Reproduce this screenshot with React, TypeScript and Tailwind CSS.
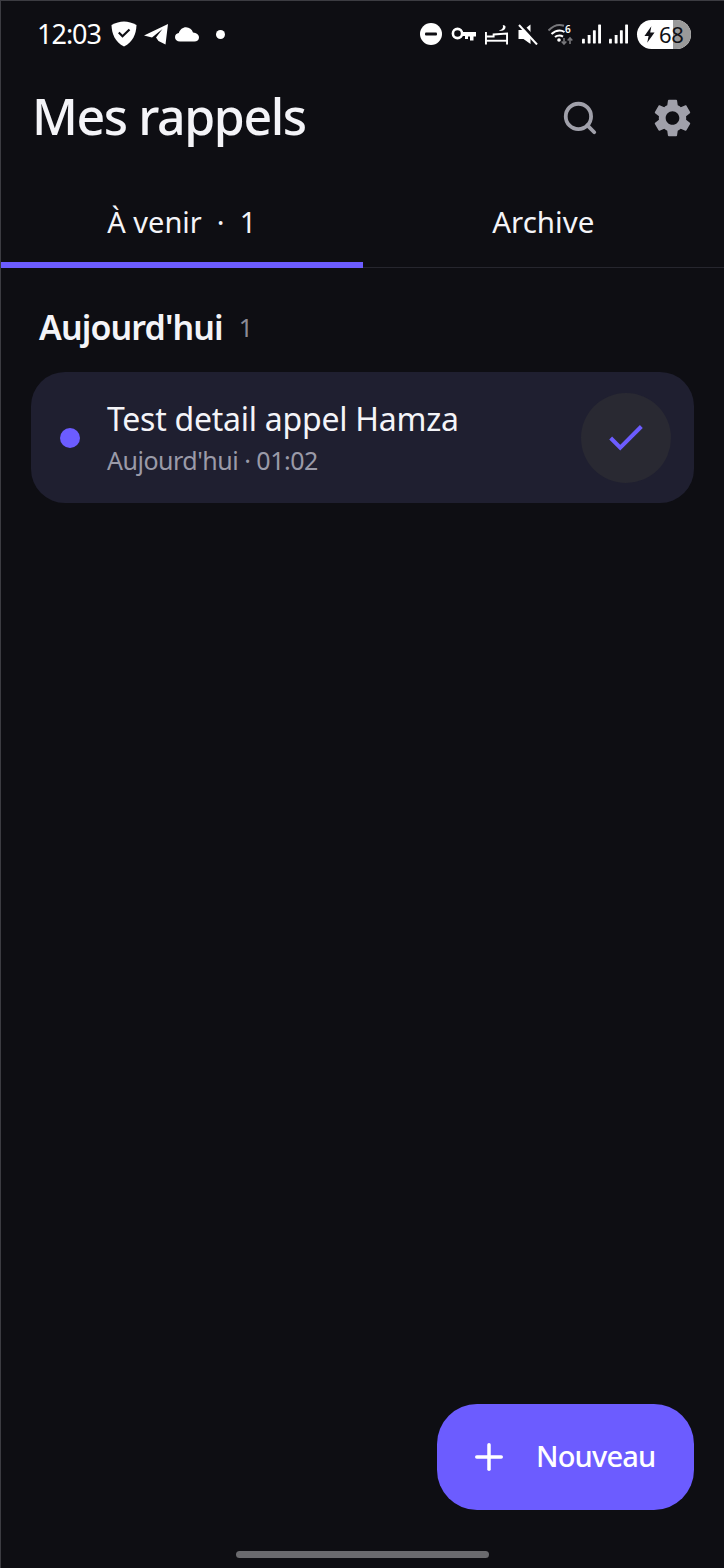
import { Search, Check, Plus } from "lucide-react";

const FONT = "font-['Noto_Sans',sans-serif]";

function Shield() {
  return (
    <svg width="26" height="26" viewBox="0 0 26 26">
      <path d="M13 0.5C9 0.5 4.5 1.8 0.5 4C0.8 13 4 21 13 25.5C22 21 25.2 13 25.5 4C21.5 1.8 17 0.5 13 0.5Z" fill="#fff" />
      <path d="M7.8 11.5L11.5 15.2L18.5 8.5" fill="none" stroke="#0e0e13" strokeWidth="2.2" />
    </svg>
  );
}

function Telegram() {
  return (
    <svg width="24" height="21" viewBox="0 0 24 21">
      <path d="M0 11.5L24 0L21.5 20.5L14.5 17L12 13.5L18.5 5L8 13.5Z" fill="#fff" />
    </svg>
  );
}

function Cloud() {
  return (
    <svg width="24" height="15" viewBox="0 0 24 15">
      <path d="M5 14.5C2 14.5 0 12.6 0 10.2C0 8 1.6 6.4 3.8 6.1C4.8 2.6 7.8 0.3 11 0.3C14.4 0.3 17 2.4 18 5.6C21.4 5.8 24 7.8 24 10.4C24 12.8 22 14.5 19.4 14.5Z" fill="#fff" />
    </svg>
  );
}

function MinusCircle() {
  return (
    <svg width="22" height="22" viewBox="0 0 22 22">
      <circle cx="11" cy="11" r="11" fill="#fff" />
      <rect x="5" y="9.5" width="12" height="3" rx="1" fill="#0e0e13" />
    </svg>
  );
}

function Key() {
  return (
    <svg width="25" height="14" viewBox="0 0 25 14">
      <circle cx="6.5" cy="6.5" r="4.6" fill="none" stroke="#fff" strokeWidth="2.6" />
      <path d="M11 5H25V9.5H22.5V13.5H19V9.5H17V12H14V9H11Z" fill="#fff" />
    </svg>
  );
}

function BedMoon() {
  return (
    <svg width="23" height="21" viewBox="0 0 24 21" fill="none" stroke="#fff">
      <path d="M1 8V21" strokeWidth="2" />
      <path d="M1 12.5H9V10.5L23 9.5V21" strokeWidth="2" />
      <path d="M1 17H23" strokeWidth="2" />
      <path d="M18.5 0.5C19.5 3.5 18 5.5 14.5 6C17.5 7.8 21.5 6 21.5 2.5C21.5 1.5 20 0.5 18.5 0.5Z" fill="#fff" stroke="none" />
    </svg>
  );
}

function Muted() {
  return (
    <svg width="20" height="21" viewBox="0 0 20 21">
      <path d="M0.5 6H5.5L12.5 0.5V20L5.5 15H0.5Z" fill="#fff" />
      <path d="M3 0L21 19" stroke="#0e0e13" strokeWidth="3" />
      <path d="M1 1L19 20.5" stroke="#fff" strokeWidth="2" />
    </svg>
  );
}

function Wifi() {
  return (
    <svg width="25" height="22" viewBox="0 0 25 22" fill="none">
      <path d="M0.5 7.5C4 3.8 8 2 11.5 2C13 2 14.5 2.3 16 2.8" stroke="#77777b" strokeWidth="2" />
      <path d="M3.5 11C6 8.6 8.8 7.4 11.5 7.4C13.5 7.4 15 8 16.5 9" stroke="#fff" strokeWidth="2" />
      <path d="M7 14C8.2 12.9 9.8 12.4 11.5 12.4C12.8 12.4 14 12.9 15 13.6" stroke="#fff" strokeWidth="2" />
      <circle cx="11" cy="17" r="1.8" fill="#fff" />
      <path d="M16 15V20.5M13.7 18.5L16 21L18.3 18.5" stroke="#77777b" strokeWidth="1.6" />
      <path d="M22 21V15.5M19.7 17.5L22 15L24.3 17.5" stroke="#77777b" strokeWidth="1.6" />
      <text x="17" y="10" fontSize="10" fontWeight="600" fill="#fff" fontFamily="'Noto Sans', sans-serif">6</text>
    </svg>
  );
}

function Signal() {
  return (
    <svg width="19" height="20" viewBox="0 0 20 20" fill="#fff">
      <rect x="0" y="15" width="3" height="5" rx="0.5" />
      <rect x="6" y="11" width="3" height="9" rx="0.5" />
      <rect x="11.5" y="6" width="3" height="14" rx="0.5" />
      <rect x="17" y="0" width="3" height="20" rx="0.5" />
    </svg>
  );
}

function Gear() {
  return (
    <svg width="37" height="38" viewBox="2.4 2 19.2 20" fill="#a0a0aa">
      <path d="M19.14 12.94c.04-.3.06-.61.06-.94 0-.32-.02-.64-.07-.94l2.03-1.58c.18-.14.23-.41.12-.61l-1.92-3.32c-.12-.22-.37-.29-.59-.22l-2.39.96c-.5-.38-1.03-.7-1.62-.94l-.36-2.54c-.04-.24-.24-.41-.48-.41h-3.84c-.24 0-.43.17-.47.41l-.36 2.54c-.59.24-1.13.57-1.62.94l-2.39-.96c-.22-.08-.47 0-.59.22L2.74 8.87c-.12.21-.08.47.12.61l2.03 1.58c-.05.3-.09.63-.09.94s.02.64.07.94l-2.03 1.58c-.18.14-.23.41-.12.61l1.92 3.32c.12.22.37.29.59.22l2.39-.96c.5.38 1.03.7 1.62.94l.36 2.54c.05.24.24.41.48.41h3.84c.24 0 .44-.17.47-.41l.36-2.54c.59-.24 1.13-.56 1.62-.94l2.39.96c.22.08.47 0 .59-.22l1.92-3.32c.12-.22.07-.47-.12-.61l-2.01-1.58zM12 15.6c-1.98 0-3.6-1.62-3.6-3.6s1.62-3.6 3.6-3.6 3.6 1.62 3.6 3.6-1.62 3.6-3.6 3.6z" />
    </svg>
  );
}

function Battery() {
  return (
    <div className="relative flex h-[29px] w-[54px] items-center overflow-hidden rounded-full bg-white pl-[7px] text-[#111116]">
      <div className="absolute inset-y-0 right-0 w-[18px] bg-[#9a9a9a]" />
      <svg className="relative" width="11" height="17" viewBox="0 0 12 18">
        <path d="M8 0L0.5 10.5H5L3.5 18L11.5 6.8H6.8Z" fill="#111116" />
      </svg>
      <span className="relative ml-[4px] text-[22px] leading-none tracking-[-0.4px]">68</span>
    </div>
  );
}

function StatusBar() {
  return (
    <div className="flex h-[66px] shrink-0 items-center pl-[36px] pr-[33px] text-white">
      <span className="-mt-[2px] text-[27px] leading-none tracking-[-1px]">12:03</span>
      <div className="ml-[10px] flex items-center">
        <Shield />
        <div className="ml-[7px]"><Telegram /></div>
        <div className="ml-[7px]"><Cloud /></div>
        <div className="ml-[17px] h-[9px] w-[9px] rounded-full bg-white" />
      </div>
      <div className="ml-auto flex items-center">
        <MinusCircle />
        <div className="ml-[9px]"><Key /></div>
        <div className="ml-[9px]"><BedMoon /></div>
        <div className="ml-[10px]"><Muted /></div>
        <div className="ml-[10px]"><Wifi /></div>
        <div className="ml-[9px]"><Signal /></div>
        <div className="ml-[8px]"><Signal /></div>
        <div className="ml-[9px]"><Battery /></div>
      </div>
    </div>
  );
}

function Tabs() {
  return (
    <div className="grid h-[94px] shrink-0 grid-cols-2 border-b border-[#26262e] text-[29.5px] leading-none text-[#f4f4f8]">
      <div className="relative flex items-center justify-center pt-[2px]">
        <span className="text-[29px]">À venir&nbsp; ·&nbsp; 1</span>
        <div className="absolute inset-x-0 -bottom-[1px] h-[6px] bg-[#6c5cff]" />
      </div>
      <div className="flex items-center justify-center pt-[2px]">Archive</div>
    </div>
  );
}

function ReminderCard() {
  return (
    <div className="mx-[30px] flex h-[131px] items-center rounded-[34px] bg-[#1f1f30] pl-[29px] pr-[23px]">
      <div className="h-[20px] w-[20px] shrink-0 rounded-full bg-[#6c5cff]" />
      <div className="ml-[27px] flex-1">
        <div className="text-[32px] leading-[40px] tracking-[-0.25px] text-[#f4f4f8]">Test detail appel Hamza</div>
        <div className="mt-[5px] text-[25px] leading-[32px] tracking-[-0.5px] text-[#9a9aa8]">Aujourd'hui · 01:02</div>
      </div>
      <div className="flex h-[90px] w-[90px] shrink-0 items-center justify-center rounded-full bg-[#292932]">
        <Check size={46} strokeWidth={2.1} strokeLinecap="butt" strokeLinejoin="miter" className="text-[#6c5cff]" />
      </div>
    </div>
  );
}

export default function App() {
  return (
    <div className={`flex h-[1568px] w-[724px] flex-col overflow-hidden border-l border-t border-[#3c3c42] bg-[#0e0e13] ${FONT}`}>
      <StatusBar />

      {/* Header */}
      <div className="flex h-[107px] shrink-0 items-center pb-[6px] pl-[31px] pr-[33px]">
        <h1 className="-mt-[4px] text-[50px] font-medium leading-none tracking-[-1.4px] text-[#f4f4f8]">Mes rappels</h1>
        <Search size={38} strokeWidth={2.4} className="ml-auto text-[#a0a0aa]" />
        <div className="ml-[55px]"><Gear /></div>
      </div>

      <Tabs />

      <div className="flex items-center pb-[21px] pl-[38px] pt-[35px]">
        <span className="text-[34px] font-semibold leading-[48px] tracking-[-0.9px] text-[#f4f4f8]">Aujourd'hui</span>
        <span className="ml-[16px] text-[25px] leading-none text-[#8b8b96]">1</span>
      </div>

      <ReminderCard />

      {/* Floating button */}
      <div className="mr-[30px] mt-auto flex h-[106px] w-[257px] items-center self-end rounded-[40px] bg-[#6c5cff] pl-[31px] text-white">
        <Plus size={42} strokeWidth={2} />
        <span className="-mt-[3px] ml-[26px] text-[29px] font-medium leading-none tracking-[-0.8px]">Nouveau</span>
      </div>

      {/* Home indicator */}
      <div className="mb-[10px] ml-[235px] mt-[41px] h-[7px] w-[253px] rounded-full bg-[#6a6a6e]" />
    </div>
  );
}
